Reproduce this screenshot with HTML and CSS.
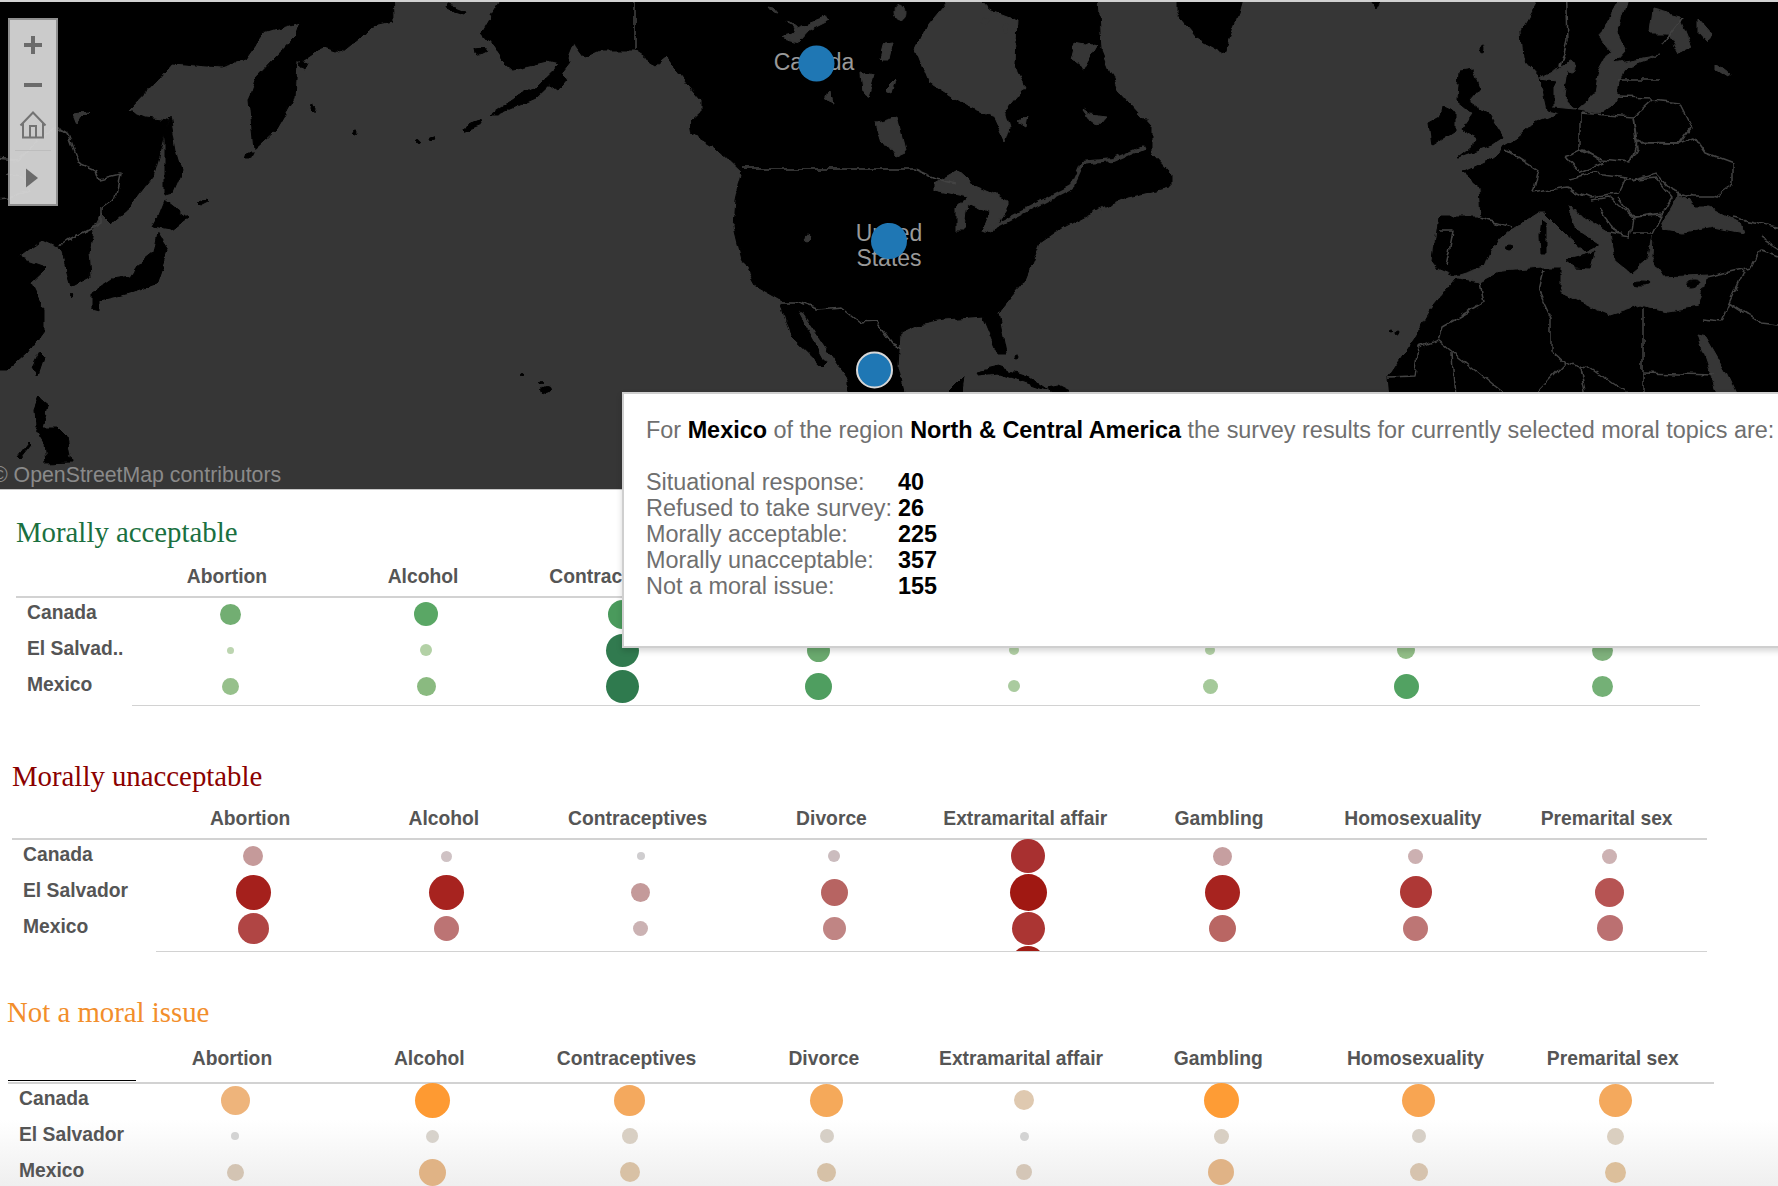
FILE: index.html
```html
<!DOCTYPE html>
<html lang="en">
<head>
<meta charset="utf-8">
<title>Moral issues survey</title>
<link rel="stylesheet" href="styles.css">
</head>
<body>
<div class="page">
  <div class="map">
    <svg class="map-art" viewBox="0 2 1778 487" width="1778" height="487">
      <defs>
        <filter id="coast" filterUnits="userSpaceOnUse" x="-20" y="-20" width="1820" height="530" color-interpolation-filters="sRGB">
          <feTurbulence type="fractalNoise" baseFrequency="0.07" numOctaves="3" seed="4" result="n"/>
          <feDisplacementMap in="SourceGraphic" in2="n" scale="8" xChannelSelector="R" yChannelSelector="G"/>
          <feGaussianBlur stdDeviation="0.5"/>
        </filter>
      </defs>
      <rect class="sea" x="0" y="0" width="1778" height="490"/>
      <g class="geo">
        <polygon class="land" points="-20,-20 392,-20 393,20 379,23 360,37 340,53 325,48 312,53 297,63 295,97 276,130 254,150 249,100 256,78 295,37 300,22 264,33 245,60 222,67 172,63 157,80 128,110 145,117 168,120 163,143 153,177 130,207 111,223 101,213 92,230 88,253 90,277 71,287 61,253 57,247 42,240 19,257 48,267 31,283 44,310 44,330 27,353 8,370 -20,370"/>
        <polygon class="sea" points="74,114 88,112 82,118 78,124"/>
        <polygon class="land" points="170,117 176,150 182,170 172,193 165,195 165,133"/>
        <polygon class="land" points="165,200 188,218 172,230 153,227 157,220"/>
        <polygon class="land" points="157,233 168,250 157,283 130,293 100,300 100,312 92,310 92,293 111,280 130,277 138,265 153,253"/>
        <polygon class="land" points="40,353 44,357 38,375 33,367"/>
        <polygon class="land" points="38,397 48,405 42,427 57,427 67,437 71,462 46,463 44,443 34,427 33,410"/>
        <polygon class="land" points="29,442 31,444 20,458 18,456"/>
        <polygon class="land" points="448,5 457,7 467,11 465,14 455,11 447,8"/>
        <polygon class="land" points="474,49 482,48 486,53 480,56 475,54"/>
        <polygon class="land" points="551,78 562,71 567,80 558,91 551,86"/>
        <polygon class="land" points="465,128 472,123 481,121 482,125 472,129 466,131"/>
        <polygon class="land" points="199,203 207,199 209,201 201,205"/>
        <polygon class="land" points="301,60 306,62 303,69 299,66"/>
        <polygon class="land" points="313,105 316,107 315,112 312,109"/>
        <polygon class="land" points="247,153 253,153 250,159 245,159"/>
        <circle class="land" cx="355" cy="132" r="2"/>
        <circle class="land" cx="418" cy="142" r="1.500"/>
        <polygon class="land" points="430,138 434,136 435,140 431,141"/>
        <circle class="land" cx="522" cy="373" r="1.500"/>
        <circle class="land" cx="541" cy="382" r="1.500"/>
        <circle class="land" cx="546" cy="390" r="3.500"/>
        <circle class="land" cx="72" cy="296" r="1.500"/>

        <polygon class="land" points="513,-20 482,33 494,47 505,63 513,70 547,62 559,65 536,87 517,97 490,115 497,115 536,98 563,72 570,63 568,57 574,42 585,57 600,50 634,50 657,65 667,57 684,80 701,100 701,112 690,122 692,133 715,147 742,173 736,200 734,227 742,260 757,287 780,300 791,337 822,367 826,363 797,310 803,313 826,347 849,380 849,400 906,400 898,367 900,333 918,325 944,320 983,317 998,353 1006,353 998,313 1025,280 1040,243 1063,227 1090,213 1128,197 1170,187 1170,173 1151,153 1151,127 1117,90 1101,50 1097,-20"/>
        <polygon class="sea" points="964,-20 929,23 916,50 929,83 967,107 994,117 1006,143 1011,127 1006,110 1025,87 1017,72 1015,63 1017,20 990,10"/>
        <polygon class="sea" points="1097,47 1084,70 1071,60 1075,43"/>
        <polygon class="sea" points="787,20 797,28 826,17 830,20 810,30 799,42 780,37 795,33"/>
        <polygon class="sea" points="768,7 773,8 778,14 773,13"/>
        <polygon class="sea" points="881,58 885,43 893,42 889,60 883,60"/>
        <polygon class="sea" points="860,72 874,75 868,97 862,93"/>
        <polygon class="sea" points="885,90 895,80 891,93"/>
        <polygon class="sea" points="830,90 833,103 826,100"/>
        <polygon class="sea" points="877,123 897,117 906,153 895,158 883,143"/>
        <polygon class="sea" points="933,183 956,170 975,187 1006,200 1006,210 990,233 983,230 990,213 967,203 964,230 956,230 956,207 967,197 933,190"/>
        <polygon class="sea" points="1083,110 1090,115 1106,117 1098,126 1090,120"/>
        <polygon class="sea" points="1018,122 1028,116 1026,127"/>
        <ellipse class="sea" cx="807" cy="237" rx="3" ry="4"/>
        <ellipse class="sea" cx="986" cy="21" rx="5" ry="3"/>
        <ellipse class="sea" cx="1006" cy="28" rx="3" ry="5"/>
        <ellipse class="sea" cx="1076" cy="48" rx="3" ry="3"/>
        <ellipse class="sea" cx="900" cy="13" rx="5" ry="7"/>
        <polyline class="strait" points="987,230 1032,207 1071,187 1082,163 1113,160 1143,147"/>
        <polyline class="line" points="634,-20 634,50"/>
        <polyline class="line" points="742,169 914,169 935,178 956,183"/>
        <polyline class="line" points="780,302 795,302 818,310 841,308 860,323 876,322 891,343 902,348"/>
        <polygon class="land" points="977,372 998,367 1029,377 1048,390 998,373 979,375"/>
        <polygon class="land" points="1048,388 1058,386 1070,392 1050,394"/>
        <polygon class="land" points="941,400 964,377 960,400"/>
        <circle class="land" cx="1017" cy="357" r="2"/>

        <polygon class="land" points="1178,-20 1178,15 1197,38 1224,53 1235,23 1247,-20"/>
        <polygon class="land" points="1354,-20 1392,-20 1377,10"/>
        <polygon class="land" points="1551,-20 1522,30 1524,60 1540,78 1541,83 1547,110 1560,113 1534,123 1515,140 1503,147 1503,150 1484,163 1463,173 1480,187 1482,217 1438,217 1436,230 1432,260 1438,268 1455,275 1457,278 1431,310 1415,337 1388,377 1390,400 1800,400 1800,-20"/>
        <polygon class="sea" points="1540,78 1568,65 1563,97 1575,110 1555,108 1555,80"/>
        <polygon class="sea" points="1630,-20 1607,20 1599,37 1610,50 1599,70 1595,93 1576,110 1599,113 1618,100 1618,88 1626,67 1660,55 1614,63 1626,50 1618,33 1633,-20"/>
        <polygon class="sea" points="1652,10 1679,17 1691,47 1679,53 1668,33 1649,33"/>
        <polygon class="sea" points="1698,17 1712,33 1707,43 1698,33"/>
        <polygon class="sea" points="1716,63 1729,73 1727,77 1716,70"/>
        <ellipse class="sea" cx="1571" cy="67" rx="4" ry="6"/>
        <polygon class="sea" points="1455,276 1484,267 1492,247 1511,230 1538,213 1545,213 1565,233 1587,253 1599,245 1576,230 1568,207 1610,233 1614,260 1630,273 1649,257 1653,235 1652,258 1664,277 1706,275 1698,307 1668,312 1641,305 1610,315 1591,307 1561,293 1561,267 1542,267 1503,270 1480,282 1457,278"/>
        <polygon class="sea" points="1662,223 1679,193 1695,207 1710,207 1741,223 1744,233 1714,227 1683,233 1664,230"/>
        <polygon class="sea" points="1697,335 1706,337 1725,370 1739,400 1719,400"/>
        <polygon class="land" points="1542,218 1547,222 1547,254 1541,254 1540,236"/>
        <ellipse class="land" cx="1509" cy="248" rx="3.5" ry="3"/>
        <polygon class="land" points="1566,260 1594,253 1590,268 1576,267"/>
        <ellipse class="land" cx="1642" cy="283" rx="8" ry="2"/>
        <ellipse class="land" cx="1692" cy="283" rx="6" ry="3"/>
        <polygon class="land" points="1459,72 1473,70 1480,87 1469,100 1488,113 1503,137 1488,147 1457,158 1480,140 1461,130 1473,113 1457,100"/>
        <polygon class="land" points="1442,107 1455,113 1455,130 1432,145 1429,123 1440,117"/>
        <ellipse class="land" cx="1483" cy="49" rx="2" ry="3"/>
        <circle class="land" cx="1390" cy="332" r="2"/>
        <circle class="land" cx="1397" cy="334" r="2"/>
        <polyline class="line" points="1566,-20 1568,40 1561,67"/>
        <polyline class="line" points="1683,17 1664,43"/>
        <polyline class="line" points="1618,97 1652,98"/>
        <polyline class="line" points="1618,80 1660,80"/>
        <polyline class="line" points="1652,100 1679,103 1691,127 1679,143 1637,142 1633,117 1652,100"/>
        <polyline class="line" points="1580,113 1633,117 1637,150 1630,163 1603,160 1580,150 1580,113"/>
        <polyline class="line" points="1507,150 1538,170 1532,193"/>
        <polyline class="line" points="1565,157 1584,150 1603,163 1580,173 1565,157"/>
        <polyline class="line" points="1568,180 1595,173 1626,177 1618,193 1591,197 1568,187 1532,193"/>
        <polyline class="line" points="1630,163 1637,143 1679,143 1695,137 1706,153 1733,163 1733,183 1714,197 1691,197 1672,190 1656,173 1630,180"/>
        <polyline class="line" points="1626,180 1656,177 1672,197 1662,213 1633,217 1618,197"/>
        <polyline class="line" points="1633,217 1662,215 1653,233 1633,233"/>
        <polyline class="line" points="1591,200 1610,197 1633,217 1630,237 1610,233"/>
        <polyline class="line" points="1600,210 1618,235"/>
        <polyline class="line" points="1480,218 1511,227"/>
        <polyline class="line" points="1438,230 1453,230 1446,267"/>
        <polyline class="line" points="1480,282 1484,303 1442,327 1438,340"/>
        <polyline class="line" points="1438,340 1419,347 1415,377 1388,378"/>
        <polyline class="line" points="1438,340 1511,400"/>
        <polyline class="line" points="1452,353 1455,400"/>
        <polyline class="line" points="1543,270 1538,290 1551,317 1551,350 1565,363 1530,400"/>
        <polyline class="line" points="1565,363 1580,368 1587,365 1637,400"/>
        <polyline class="line" points="1580,368 1587,400"/>
        <polyline class="line" points="1643,308 1643,400"/>
        <polyline class="line" points="1643,373 1714,375"/>
        <polyline class="line" points="1706,277 1752,267 1760,250 1800,263"/>
        <polyline class="line" points="1702,320 1721,322 1729,303 1744,270"/>
        <polyline class="line" points="1729,303 1760,323 1800,327"/>
        <polyline class="line" points="1733,217 1800,232"/>
        <polyline class="line" points="1760,237 1800,262"/>
        <polyline class="line" points="-20,157 19,160 38,140 57,127 67,133 78,162 96,170 99,180 120,175 115,197 101,207 101,223 69,240 57,248"/>
        <polyline class="line" points="-20,200 10,198 30,190 20,178 5,175"/>
      </g>
      <text class="place" x="814" y="70" text-anchor="middle">Canada</text>
      <text class="place" x="889" y="241" text-anchor="middle">United</text>
      <text class="place" x="889" y="266" text-anchor="middle">States</text>
      <circle class="pin" cx="816.500" cy="63.500" r="18"/>
      <circle class="pin" cx="889" cy="241" r="18"/>
      <circle class="pin pin-on" cx="874.500" cy="370" r="17.500"/>
      <text class="credit" x="-8" y="482">© OpenStreetMap contributors</text>
    </svg>
    <div class="controls">
      <button class="ctl" type="button" aria-label="Zoom in"><svg viewBox="0 0 20 20" width="20" height="20"><path class="ico-bar" d="M10 1v18M1 10h18"/></svg></button>
      <button class="ctl" type="button" aria-label="Zoom out"><svg viewBox="0 0 20 20" width="20" height="20"><path class="ico-bar" d="M1 10h18"/></svg></button>
      <button class="ctl" type="button" aria-label="Home"><svg viewBox="0 0 28 28" width="28" height="28"><path class="ico-line" d="M1.500 14.500 14 1.500l12.500 13M4 12.500V26.500h20V12.500M11 26.500V15h6v11.500"/></svg></button>
      <div class="ctl-sep"></div>
      <button class="ctl ctl-play" type="button" aria-label="Expand"><svg viewBox="0 0 14 20" width="14" height="20"><path class="ico-fill" d="M1 .5 13 10 1 19.500z"/></svg></button>
    </div>
  </div>

  <section class="panel panel-a">
    <h2 class="title">Morally acceptable</h2>
    <div class="grid head">
      <span></span><span>Abortion</span><span>Alcohol</span><span>Contraceptives</span><span>Divorce</span><span>Extramarital affair</span><span>Gambling</span><span>Homosexuality</span><span>Premarital sex</span>
    </div>
    <div class="grid body">
      <b class="label">Canada</b>
      <i class="dot" style="--s:21px;--c:#72ae72"></i><i class="dot" style="--s:24px;--c:#5aa765"></i><i class="dot" style="--s:29px;--c:#4a9a5c"></i><i class="dot" style="--s:26px;--c:#5aa765"></i><i class="dot" style="--s:14px;--c:#a5c99a"></i><i class="dot" style="--s:13px;--c:#a5c99a"></i><i class="dot" style="--s:22px;--c:#72ae72"></i><i class="dot" style="--s:22px;--c:#72ae72"></i>
      <b class="label">El Salvad..</b>
      <i class="dot" style="--s:7px;--c:#bcd5b0"></i><i class="dot" style="--s:12px;--c:#b3d1a6"></i><i class="dot" style="--s:33px;--c:#317a4f"></i><i class="dot" style="--s:23px;--c:#6aa96e"></i><i class="dot" style="--s:10px;--c:#b3d1a6"></i><i class="dot" style="--s:10px;--c:#b3d1a6"></i><i class="dot" style="--s:18px;--c:#92be87"></i><i class="dot" style="--s:21px;--c:#7fb17c"></i>
      <b class="label">Mexico</b>
      <i class="dot" style="--s:17px;--c:#96c08b"></i><i class="dot" style="--s:19px;--c:#8aba80"></i><i class="dot" style="--s:33px;--c:#2f7a4e"></i><i class="dot" style="--s:27px;--c:#4f9e60"></i><i class="dot" style="--s:12px;--c:#aacb9f"></i><i class="dot" style="--s:15px;--c:#a5c99a"></i><i class="dot" style="--s:25px;--c:#52a262"></i><i class="dot" style="--s:21px;--c:#74b076"></i>
      <div class="rule"></div>
    </div>
  </section>

  <section class="panel panel-b">
    <h2 class="title">Morally unacceptable</h2>
    <div class="grid head">
      <span></span><span>Abortion</span><span>Alcohol</span><span>Contraceptives</span><span>Divorce</span><span>Extramarital affair</span><span>Gambling</span><span>Homosexuality</span><span>Premarital sex</span>
    </div>
    <div class="grid body">
      <b class="label">Canada</b>
      <i class="dot" style="--s:20px;--c:#c59a9a"></i><i class="dot" style="--s:11px;--c:#cfc2c4"></i><i class="dot" style="--s:8px;--c:#cfcdcf"></i><i class="dot" style="--s:12px;--c:#cbbcbe"></i><i class="dot" style="--s:34px;--c:#a83030"></i><i class="dot" style="--s:19px;--c:#c69fa0"></i><i class="dot" style="--s:15px;--c:#ccb0b1"></i><i class="dot" style="--s:15px;--c:#cdb2b3"></i>
      <b class="label">El Salvador</b>
      <i class="dot" style="--s:35px;--c:#a5201c"></i><i class="dot" style="--s:35px;--c:#a7231f"></i><i class="dot" style="--s:19px;--c:#c49a9a"></i><i class="dot" style="--s:27px;--c:#b76462"></i><i class="dot" style="--s:37px;--c:#a01812"></i><i class="dot" style="--s:35px;--c:#a7231f"></i><i class="dot" style="--s:32px;--c:#ae3836"></i><i class="dot" style="--s:29px;--c:#b65453"></i>
      <b class="label">Mexico</b>
      <i class="dot" style="--s:31px;--c:#b04544"></i><i class="dot" style="--s:25px;--c:#bc7474"></i><i class="dot" style="--s:15px;--c:#cbb2b3"></i><i class="dot" style="--s:23px;--c:#c08584"></i><i class="dot" style="--s:33px;--c:#ab3533"></i><i class="dot" style="--s:27px;--c:#b96663"></i><i class="dot" style="--s:25px;--c:#bd7675"></i><i class="dot" style="--s:26px;--c:#bb7071"></i>
      <div class="peek"><i class="dot" style="--s:34px;--c:#a01c15"></i></div>
      <div class="rule"></div>
    </div>
  </section>

  <section class="panel panel-c">
    <h2 class="title">Not a moral issue</h2>
    <div class="grid head">
      <span class="corner"></span><span>Abortion</span><span>Alcohol</span><span>Contraceptives</span><span>Divorce</span><span>Extramarital affair</span><span>Gambling</span><span>Homosexuality</span><span>Premarital sex</span>
    </div>
    <div class="grid body">
      <b class="label">Canada</b>
      <i class="dot" style="--s:29px;--c:#eeb47b"></i><i class="dot" style="--s:35px;--c:#fe9a32"></i><i class="dot" style="--s:31px;--c:#f4a95e"></i><i class="dot" style="--s:33px;--c:#f5a95a"></i><i class="dot" style="--s:20px;--c:#dfc9b0"></i><i class="dot" style="--s:35px;--c:#fe9c35"></i><i class="dot" style="--s:33px;--c:#f8a552"></i><i class="dot" style="--s:33px;--c:#f4a95d"></i>
      <b class="label">El Salvador</b>
      <i class="dot" style="--s:8px;--c:#d3d3d3"></i><i class="dot" style="--s:13px;--c:#d7d2cb"></i><i class="dot" style="--s:16px;--c:#d8cfc3"></i><i class="dot" style="--s:14px;--c:#d6cfc6"></i><i class="dot" style="--s:9px;--c:#d3d3d3"></i><i class="dot" style="--s:15px;--c:#d8cfc3"></i><i class="dot" style="--s:14px;--c:#d6cfc6"></i><i class="dot" style="--s:17px;--c:#dacfc0"></i>
      <b class="label">Mexico</b>
      <i class="dot" style="--s:17px;--c:#d3c4b3"></i><i class="dot" style="--s:27px;--c:#e0b385"></i><i class="dot" style="--s:20px;--c:#d8c1a5"></i><i class="dot" style="--s:19px;--c:#d6c1a7"></i><i class="dot" style="--s:16px;--c:#d4c6b7"></i><i class="dot" style="--s:26px;--c:#e0b386"></i><i class="dot" style="--s:18px;--c:#d6c3ae"></i><i class="dot" style="--s:21px;--c:#dcbf9b"></i>
    </div>
  </section>

  <aside class="tooltip">
    <p class="tip-lead">For <b>Mexico</b> of the region <b>North &amp; Central America</b> the survey results for currently selected moral topics are:</p>
    <dl class="tip-list">
      <dt>Situational response:</dt><dd>40</dd>
      <dt>Refused to take survey:</dt><dd>26</dd>
      <dt>Morally acceptable:</dt><dd>225</dd>
      <dt>Morally unacceptable:</dt><dd>357</dd>
      <dt>Not a moral issue:</dt><dd>155</dd>
    </dl>
  </aside>
</div>
</body>
</html>
```
FILE: styles.css
```css
* { box-sizing: border-box; }
html, body { margin: 0; padding: 0; background: #fff; }
.page {
  position: relative;
  width: 1778px;
  height: 1186px;
  overflow: hidden;
  background: linear-gradient(to bottom, #fff 1120px, #efefef 1186px);
  font-family: "Liberation Sans", Arial, sans-serif;
}

/* map */
.map {
  position: relative;
  height: 490px;
  border-top: 2px solid #d2d2d2;
  border-bottom: 1px solid #c8c8c8;
  overflow: hidden;
  background: #363636;
}
.map-art { display: block; }
.sea { fill: #363636; stroke: #363636; stroke-width: 1; stroke-linejoin: round; }
.land { fill: #000; stroke: #000; stroke-width: 1; stroke-linejoin: round; }
.geo { filter: url(#coast); }
.line { fill: none; stroke: #434343; stroke-width: 1.5; stroke-linejoin: round; }
.strait { fill: none; stroke: #363636; stroke-width: 4; stroke-linejoin: round; }
.place { fill: #999; font: 23px "Liberation Sans", Arial, sans-serif; }
.pin { fill: #1f77b4; }
.pin-on { stroke: #d8d8d8; stroke-width: 2; }
.credit { fill: #8a8a8a; font: 21.3px "Liberation Sans", Arial, sans-serif; }

/* map controls */
.controls {
  position: absolute;
  left: 8px;
  top: 16px;
  width: 50px;
  height: 188px;
  padding-top: 5px;
  display: flex;
  flex-direction: column;
  align-items: center;
  border: 2px solid #8f8f8f;
  background: rgba(214, 214, 214, 0.95);
}
.ctl {
  flex: none;
  width: 100%;
  height: 40px;
  padding: 0;
  border: 0;
  background: none;
  display: flex;
  align-items: center;
  justify-content: center;
}
.ctl-sep { flex: none; width: 36px; height: 1px; margin-top: 5px; background: #bdbdbd; }
.ctl-play { height: 53px; padding-right: 3px; }
.ico-bar { fill: none; stroke: #6b6b6b; stroke-width: 4; }
.ico-line { fill: none; stroke: #737373; stroke-width: 2; }
.ico-fill { fill: #6b6b6b; }

/* survey panels */
.panel { --cols: 116px repeat(8, 196px); --x: 16px; width: max-content; margin-left: var(--x); }
.panel-a { margin-top: 22px; }
.panel-b { --cols: 144.200px repeat(8, 193.800px); --x: 12px; margin-top: 50px; }
.panel-c { --cols: 128.400px repeat(8, 197.250px); --x: 8px; margin-top: 40px; }
.title {
  margin: 0;
  height: 40px;
  font: 400 28.800px/40px "Liberation Serif", "Times New Roman", serif;
  white-space: nowrap;
}
.panel-a .title { color: #1a7040; }
.panel-b .title { color: #8b0000; }
.panel-c .title { color: #f28e2b; margin-left: -1px; }
.grid { display: grid; grid-template-columns: var(--cols); }
.head {
  padding-top: 14px;
  border-bottom: 2px solid #d2d2d2;
  align-items: end;
  color: #555;
  font-weight: 700;
  font-size: 19.300px;
  line-height: 22px;
  text-align: center;
  white-space: nowrap;
}
.head span { padding: 0 6px 8px 0; }
.panel-b .head { padding-top: 12px; }
.panel-c .head { padding-top: 16px; }
.panel-c .head span { padding-bottom: 12px; }
.panel-c .head .corner {
  align-self: stretch;
  padding: 0;
  margin-bottom: 1px;
  border-bottom: 1px solid #000;
}
.body {
  margin-top: -2px;
  grid-template-rows: 36px 36px 36px auto;
  align-items: center;
  justify-items: center;
}
.label {
  justify-self: start;
  padding-left: 11px;
  margin-bottom: 2px;
  color: #555;
  font-size: 19.300px;
  line-height: 22px;
  white-space: nowrap;
}
.dot {
  display: block;
  width: var(--s);
  height: var(--s);
  border-radius: 50%;
  background: var(--c);
}
.rule {
  grid-column: 2 / -1;
  align-self: start;
  width: 100%;
  height: 1px;
  background: #d2d2d2;
}
.panel-a .rule { margin-top: 1px; }
.panel-b .body { grid-template-rows: 36px 36px 36px 5px auto; }
.peek {
  grid-column: 6;
  grid-row: 4;
  align-self: stretch;
  height: 5px;
  overflow: hidden;
}

/* tooltip */
.tooltip {
  position: absolute;
  left: 622px;
  top: 392px;
  right: -10px;
  height: 256px;
  padding: 23px 0 0 22px;
  border: 2px solid #cfcfcf;
  background: #fff;
  box-shadow: 0 3px 6px rgba(0, 0, 0, 0.16);
  color: #6f6f6f;
  font-size: 23.420px;
  line-height: 26px;
  white-space: nowrap;
}
.tooltip b, .tip-list dd { color: #000; font-weight: 700; }
.tip-lead { margin: 0; }
.tip-list {
  display: grid;
  grid-template-columns: 252px auto;
  justify-content: start;
  margin: 26px 0 0;
}
.tip-list dd { margin: 0; }
```
